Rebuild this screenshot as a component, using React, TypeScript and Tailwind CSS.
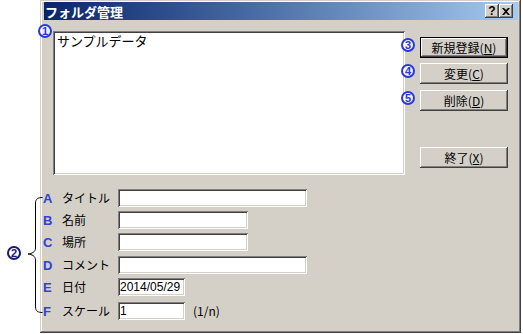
const raised =
  'bg-[#d4d0c8] shadow-[inset_-1px_-1px_0_#404040,inset_1px_1px_0_#ffffff,inset_-2px_-2px_0_#808080,inset_2px_2px_0_#d4d0c8]'
const sunken =
  'bg-white shadow-[inset_1px_1px_0_#808080,inset_-1px_-1px_0_#ffffff,inset_2px_2px_0_#404040,inset_-2px_-2px_0_#d4d0c8]'

const jp = "font-['Noto_Sans_CJK_JP',sans-serif]"

type Row = { key: string; label: string; width: string; mt: string; value?: string; suffix?: string }

const rows: Row[] = [
  { key: 'A', label: 'タイトル', width: 'w-[189px]', mt: 'mt-0' },
  { key: 'B', label: '名前', width: 'w-[130px]', mt: 'mt-[4px]' },
  { key: 'C', label: '場所', width: 'w-[130px]', mt: 'mt-[4px]' },
  { key: 'D', label: 'コメント', width: 'w-[189px]', mt: 'mt-[5px]' },
  { key: 'E', label: '日付', width: 'w-[67px]', mt: 'mt-[4px]', value: '2014/05/29' },
  { key: 'F', label: 'スケール', width: 'w-[67px]', mt: 'mt-[6px]', value: '1', suffix: '(1/n)' },
]

function Button({ label, mnemonic, isDefault }: { label: string; mnemonic: string; isDefault?: boolean }) {
  const face = (
    <div className={`flex h-full w-full items-center justify-center text-[12px] leading-none text-black ${raised}`}>
      {label}(<span className="underline underline-offset-1">{mnemonic}</span>)
    </div>
  )
  if (isDefault) {
    return <div className="h-[21px] w-[88px] border border-black">{face}</div>
  }
  return <div className="h-[21px] w-[88px]">{face}</div>
}

function Circled({ n, className }: { n: string; className: string }) {
  return (
    <span
      className={`absolute flex h-[14px] w-[14px] items-center justify-center rounded-full border-[2px] bg-white/70 font-['Liberation_Sans',sans-serif] text-[11px] font-bold leading-none ${className}`}
    >
      {n}
    </span>
  )
}

export default function App() {
  return (
    <div className={`relative h-[334px] w-[523px] overflow-hidden bg-white pl-[40px] ${jp}`}>
      <div className="relative h-[333px] w-[481px] bg-[#d4d0c8] shadow-[inset_-1px_-1px_0_#404040,inset_1px_1px_0_#d4d0c8,inset_-2px_-2px_0_#808080,inset_2px_2px_0_#ffffff]">
        {/* title bar */}
        <div className="ml-[4px] mr-[3px] flex h-[18px] translate-y-[2px] items-center bg-gradient-to-r from-[#0a246a] to-[#a6caf0]">
          <span className="pl-[1px] text-[13px] font-bold leading-none text-white">フォルダ管理</span>
          <div className="ml-auto mr-[5px] flex">
            <div className={`flex h-[14px] w-[14px] items-center justify-center ${raised}`}>
              <span className="font-['Liberation_Sans',sans-serif] text-[12px] font-bold leading-none text-black">?</span>
            </div>
            <div className={`flex h-[14px] w-[14px] items-center justify-center ${raised}`}>
              <svg width="8" height="7" viewBox="0 0 8 7">
                <path d="M0 0h2l2 2 2-2h2L5 3.5 8 7H6L4 5 2 7H0l3-3.5z" fill="#000" />
              </svg>
            </div>
          </div>
        </div>

        {/* list + buttons */}
        <div className="mt-[13px] flex">
          <div className={`ml-[13px] h-[144px] w-[352px] pl-[4px] pt-[3px] ${sunken}`}>
            <div className="text-[13px] leading-[14px] text-black">サンプルデータ</div>
          </div>
          <div className="ml-[15px] flex flex-col pt-[6px]">
            <Button label="新規登録" mnemonic="N" isDefault />
            <div className="mt-[5px]">
              <Button label="変更" mnemonic="C" />
            </div>
            <div className="mt-[6px]">
              <Button label="削除" mnemonic="D" />
            </div>
            <div className="mt-[36px]">
              <Button label="終了" mnemonic="X" />
            </div>
          </div>
        </div>

        {/* form */}
        <div className="mt-[14px] flex flex-col pl-[3px]">
          {rows.map((r) => (
            <div key={r.key} className={`flex h-[18px] items-center ${r.mt}`}>
              <span className="w-[19px] font-['Liberation_Sans',sans-serif] text-[13px] font-bold leading-none text-[#3040d8]">
                {r.key}
              </span>
              <span className="w-[56px] text-[12px] leading-none text-black">{r.label}</span>
              <div className={`flex h-[18px] items-center ${r.width} ${sunken}`}>
                {r.value && (
                  <span className="pl-[2px] font-['Liberation_Sans',sans-serif] text-[12px] leading-none text-black">
                    {r.value}
                  </span>
                )}
              </div>
              {r.suffix && <span className="ml-[8px] text-[12px] leading-none text-black">{r.suffix}</span>}
            </div>
          ))}
        </div>
      </div>

      {/* annotations */}
      <Circled n="1" className="left-[38px] top-[24px] border-[#2a38e0] text-[#2a38e0]" />
      <Circled n="3" className="left-[401px] top-[38px] border-[#2a38e0] text-[#2a38e0]" />
      <Circled n="4" className="left-[401px] top-[64px] border-[#2a38e0] text-[#2a38e0]" />
      <Circled n="5" className="left-[401px] top-[91px] border-[#2a38e0] text-[#2a38e0]" />
      <Circled n="2" className="left-[7px] top-[246px] border-[#1a1a6e] text-[#1a1a6e]" />
      <svg className="absolute left-[26px] top-[196px]" width="18" height="118" viewBox="0 0 18 118">
        <path
          d="M16.5 1.5 C12 1.5 9.5 3 9.5 7 L9.5 52 C9.5 56 6 57.5 2 58 C6 58.5 9.5 60 9.5 64 L9.5 111 C9.5 115 12 116.5 16.5 116.5"
          fill="none"
          stroke="#000"
          strokeWidth="1"
        />
      </svg>
    </div>
  )
}
